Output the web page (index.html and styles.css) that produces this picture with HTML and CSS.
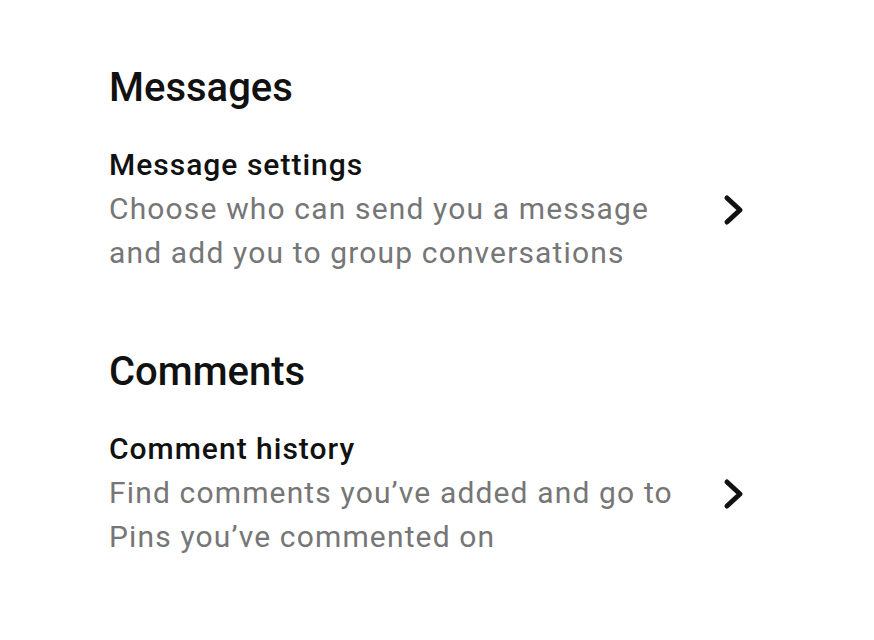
FILE: index.html
```html
<!DOCTYPE html>
<html lang="en">
<head>
    <meta charset="UTF-8">
    <meta name="viewport" content="width=device-width, initial-scale=1.0">
    <title>Settings</title>
    <link rel="stylesheet" href="styles.css">
</head>
<body>
    <div class="container">
        <div class="section">
            <h2>Messages</h2>
            <div class="row">
                <div class="row-text">
                    <div class="row-title">Message settings</div>
                    <div class="row-desc">Choose who can send you a message and add you to group conversations</div>
                </div>
                <svg class="chevron" width="24" height="32" viewBox="0 0 24 32">
                    <path d="M5 4 L18 16 L5 28" fill="none" stroke="#111" stroke-width="5" stroke-linecap="round" stroke-linejoin="round"/>
                </svg>
            </div>
        </div>

        <div class="section">
            <h2>Comments</h2>
            <div class="row">
                <div class="row-text">
                    <div class="row-title">Comment history</div>
                    <div class="row-desc">Find comments you’ve added and go to Pins you’ve commented on</div>
                </div>
                <svg class="chevron" width="24" height="32" viewBox="0 0 24 32">
                    <path d="M5 4 L18 16 L5 28" fill="none" stroke="#111" stroke-width="5" stroke-linecap="round" stroke-linejoin="round"/>
                </svg>
            </div>
        </div>
    </div>
</body>
</html>
```

FILE: styles.css
```css
body {
    margin: 0;
    font-family: Roboto, "Liberation Sans", sans-serif;
    background-color: #fff;
    color: #111;
}
.container {
    padding: 64px 0 0 109px;
    width: 637px;
}
.section {
    margin-bottom: 73px;
}
h2 {
    font-size: 40px;
    font-weight: 500;
    line-height: 48px;
    margin: 0 0 33px;
}
.row {
    display: flex;
    align-items: center;
    justify-content: space-between;
}
.row-text {
    width: 580px;
}
.row-title {
    font-size: 30px;
    font-weight: 500;
    line-height: 40px;
    letter-spacing: 1px;
    margin-bottom: 2px;
}
.row-desc {
    font-size: 30px;
    line-height: 44px;
    letter-spacing: 1.15px;
    color: #767676;
}
.chevron {
    display: block;
    flex-shrink: 0;
}
```
